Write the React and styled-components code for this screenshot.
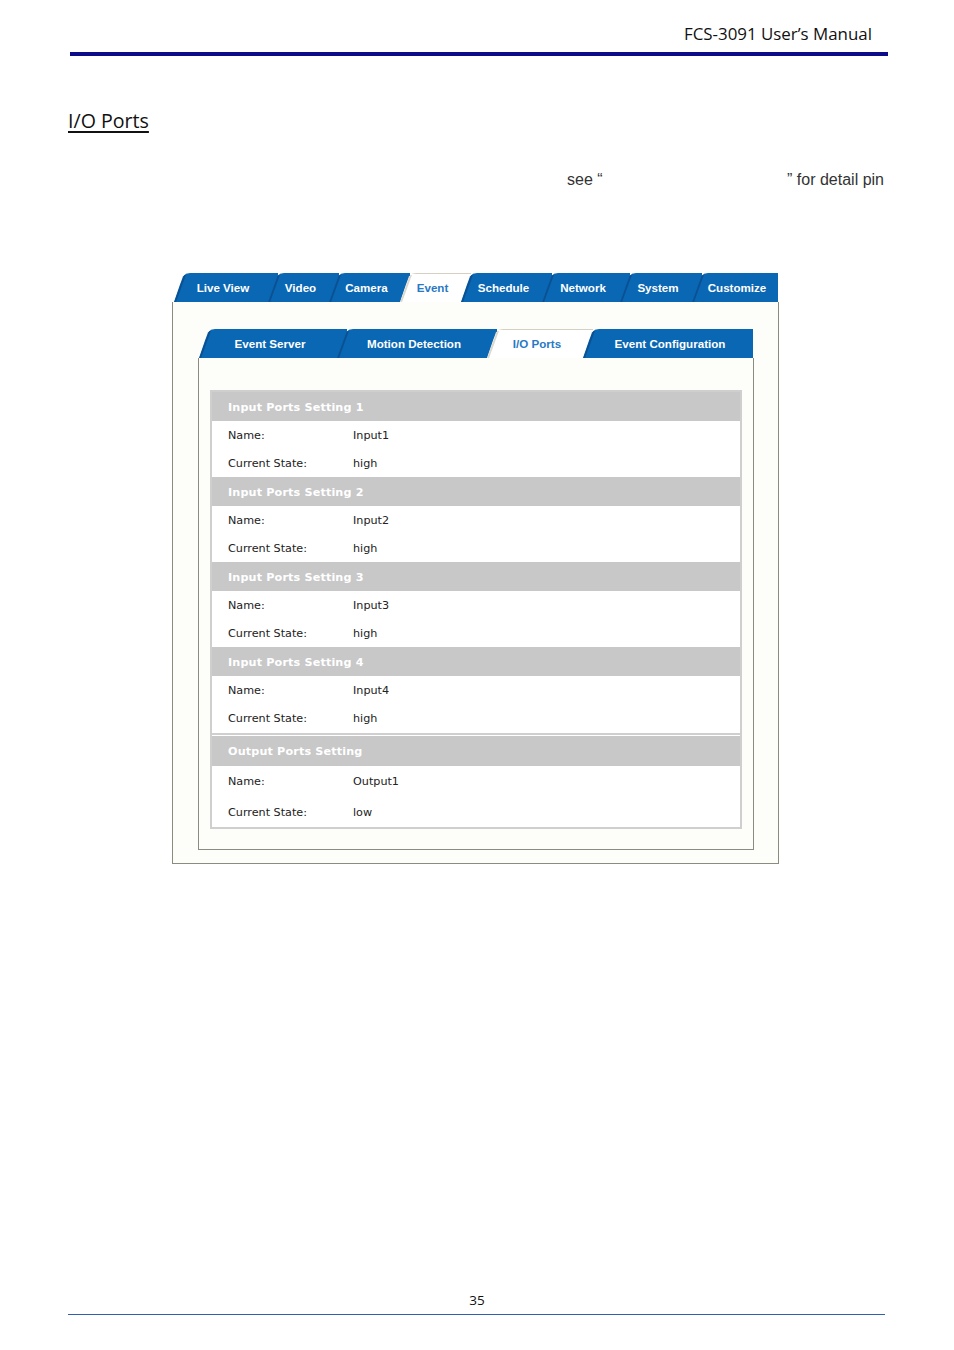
import React from "react";
import styled, { createGlobalStyle } from "styled-components";

const GlobalStyle = createGlobalStyle`
  html, body { margin: 0; padding: 0; background: #fff; }
  body { font-family: "Open Sans", "Liberation Sans", sans-serif; }
  * { box-sizing: border-box; }
`;

const Page = styled.div`
  width: 954px;
  height: 1350px;
  display: flex;
  flex-direction: column;
  background: #fff;
`;

const Header = styled.header`
  padding-top: 23px;
`;

const HeaderTitle = styled.div`
  text-align: right;
  padding-right: 82px;
  font-family: "Open Sans", sans-serif;
  font-size: 16.9px;
  line-height: 22px;
  color: #111;
`;

const HeaderRule = styled.div`
  margin: 7px 66px 0 70px;
  height: 4px;
  background: #0c0c8a;
`;

const Heading = styled.h2`
  margin: 52px 0 0 68px;
  font-family: "Open Sans", sans-serif;
  font-weight: 400;
  font-size: 19.6px;
  line-height: 26px;
  color: #111;
  text-decoration: underline;
  text-underline-offset: 3px;
  text-decoration-thickness: 1.5px;
`;

const Paragraph = styled.p`
  margin: 36px 0 0 567px;
  width: 317px;
  display: flex;
  justify-content: space-between;
  font-family: "Liberation Sans", Arial, sans-serif;
  font-size: 16px;
  line-height: 20px;
  color: #333;
`;

const Panel = styled.div`
  margin: 83px 0 0 172px;
  width: 607px;
`;

const OV = 10;

const TabRow = styled.div`
  display: flex;
  height: 29px;
  padding-left: ${(p) => p.$indent}px;
`;

const Tab = styled.div`
  position: relative;
  flex: none;
  width: ${(p) => p.$w + (p.$last ? 0 : OV)}px;
  margin-right: ${(p) => (p.$last ? 0 : -OV)}px;
  height: 29px;
  display: flex;
  align-items: center;
  justify-content: center;
  padding: 0 ${(p) => (p.$last ? 0 : OV)}px 0 4px;
  background: ${(p) => (p.$active ? "#ffffff" : "#0a67b4")};
  box-shadow: ${(p) => (p.$active ? "inset 0 1px 0 #d6d0c2" : "none")};
  color: ${(p) => (p.$active ? "#2a78c6" : "#ffffff")};
  font-family: "Liberation Sans", Arial, sans-serif;
  font-weight: 700;
  font-size: 11.6px;
  white-space: nowrap;
  clip-path: polygon(0 100%, 6px 40%, 9px 12%, 12px 3%, 16px 0, 100% 0, 100% 100%);
  &::before {
    content: "";
    position: absolute;
    left: 5px;
    top: 2px;
    bottom: 0;
    width: 1.5px;
    background: ${(p) => (p.$active ? "#ddd8cc" : "#0b5192")};
    transform: skewX(-20deg);
  }
`;

const PanelBody = styled.div`
  border: 1px solid #8b8b80;
  border-top: none;
  background: #fdfdfa;
  padding: 27px 24px 13px 25px;
`;

const InnerBox = styled.div`
  width: 556px;
`;

const InnerBody = styled.div`
  border: 1px solid #8b8b80;
  border-top: none;
  background: #fdfdfa;
  padding: 32px 11px 20px 11px;
`;

const Table = styled.div`
  border: 2px solid #cfcfcf;
  background: #fff;
`;

const SectionHeader = styled.div`
  height: ${(p) => p.$h}px;
  display: flex;
  align-items: center;
  padding: 1px 0 0 16px;
  background: #c8c8c8;
  color: #fff;
  font-family: "DejaVu Sans", Verdana, sans-serif;
  font-weight: 700;
  font-size: 11.2px;
  letter-spacing: 0.15px;
`;

const Row = styled.div`
  height: ${(p) => p.$h}px;
  display: grid;
  grid-template-columns: 125px 1fr;
  align-items: center;
  padding-left: 16px;
  font-family: "DejaVu Sans", Verdana, sans-serif;
  font-size: 11.2px;
  color: #222;
`;

const Divider = styled.div`
  margin: 1px 0;
  height: 2px;
  background: #cfcfcf;
`;

const Footer = styled.footer`
  margin-top: auto;
  padding-bottom: 35px;
`;

const PageNumber = styled.div`
  text-align: center;
  font-family: "Open Sans", sans-serif;
  font-size: 13.5px;
  line-height: 20px;
  color: #111;
`;

const FooterRule = styled.div`
  margin: 4px 69px 0 68px;
  height: 1px;
  background: #2f5fae;
`;

const mainTabs = [
  { label: "Live View", w: 94 },
  { label: "Video", w: 61 },
  { label: "Camera", w: 71 },
  { label: "Event", w: 61, active: true },
  { label: "Schedule", w: 81 },
  { label: "Network", w: 78 },
  { label: "System", w: 72 },
  { label: "Customize", w: 86 },
];

const subTabs = [
  { label: "Event Server", w: 138 },
  { label: "Motion Detection", w: 150 },
  { label: "I/O Ports", w: 96, active: true },
  { label: "Event Configuration", w: 170 },
];

const inputs = [1, 2, 3, 4];

export default function App() {
  return (
    <Page>
      <GlobalStyle />
      <Header>
        <HeaderTitle>FCS-3091 User’s Manual</HeaderTitle>
        <HeaderRule />
      </Header>
      <Heading>I/O Ports</Heading>
      <Paragraph>
        <span>see “</span>
        <span>” for detail pin</span>
      </Paragraph>
      <Panel>
        <TabRow $indent={2}>
          {mainTabs.map((t, i) => (
            <Tab key={t.label} $w={t.w} $active={t.active} $last={i === mainTabs.length - 1}>
              {t.label}
            </Tab>
          ))}
        </TabRow>
        <PanelBody>
          <InnerBox>
            <TabRow $indent={1}>
              {subTabs.map((t, i) => (
                <Tab key={t.label} $w={t.w} $active={t.active} $last={i === subTabs.length - 1}>
                  {t.label}
                </Tab>
              ))}
            </TabRow>
            <InnerBody>
              <Table>
                {inputs.map((n) => (
                  <React.Fragment key={n}>
                    <SectionHeader $h={29}>Input Ports Setting {n}</SectionHeader>
                    <Row $h={28}>
                      <span>Name:</span>
                      <span>Input{n}</span>
                    </Row>
                    <Row $h={28}>
                      <span>Current State:</span>
                      <span>high</span>
                    </Row>
                  </React.Fragment>
                ))}
                <Divider />
                <SectionHeader $h={30}>Output Ports Setting</SectionHeader>
                <Row $h={31}>
                  <span>Name:</span>
                  <span>Output1</span>
                </Row>
                <Row $h={30}>
                  <span>Current State:</span>
                  <span>low</span>
                </Row>
              </Table>
            </InnerBody>
          </InnerBox>
        </PanelBody>
      </Panel>
      <Footer>
        <PageNumber>35</PageNumber>
        <FooterRule />
      </Footer>
    </Page>
  );
}
